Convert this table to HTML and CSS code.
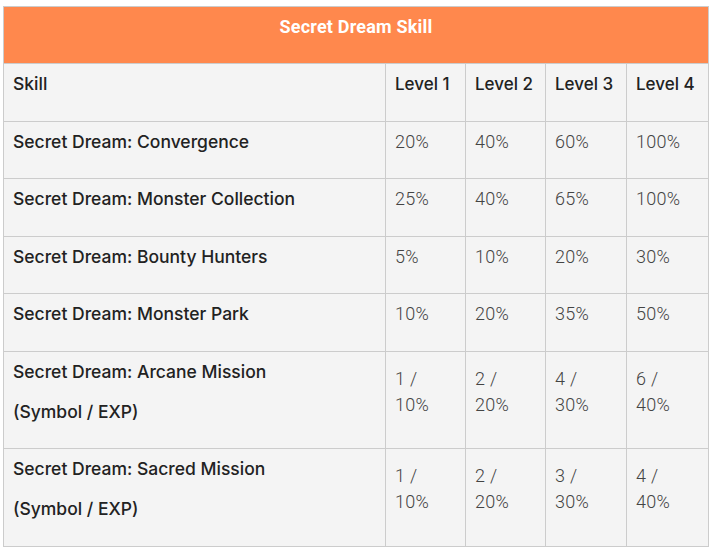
FILE: index.html
```html
<!DOCTYPE html>
<html>
<head>
<meta charset="utf-8">
<link rel="stylesheet" href="styles.css">
</head>
<body>
<div class="wrap">
<table class="skills">
  <colgroup>
    <col class="c-name"><col class="c-lv"><col class="c-lv"><col class="c-lv3"><col class="c-lv4">
  </colgroup>
  <thead>
    <tr><th colspan="5" class="title">Secret Dream Skill</th></tr>
    <tr class="head">
      <td class="name">Skill</td>
      <td class="lvh">Level 1</td>
      <td class="lvh">Level 2</td>
      <td class="lvh">Level 3</td>
      <td class="lvh">Level 4</td>
    </tr>
  </thead>
  <tbody>
    <tr>
      <td class="name">Secret Dream: Convergence</td>
      <td class="val">20%</td><td class="val">40%</td><td class="val">60%</td><td class="val">100%</td>
    </tr>
    <tr>
      <td class="name">Secret Dream: Monster Collection</td>
      <td class="val">25%</td><td class="val">40%</td><td class="val">65%</td><td class="val">100%</td>
    </tr>
    <tr>
      <td class="name">Secret Dream: Bounty Hunters</td>
      <td class="val">5%</td><td class="val">10%</td><td class="val">20%</td><td class="val">30%</td>
    </tr>
    <tr>
      <td class="name">Secret Dream: Monster Park</td>
      <td class="val">10%</td><td class="val">20%</td><td class="val">35%</td><td class="val">50%</td>
    </tr>
    <tr>
      <td class="name">Secret Dream: Arcane Mission<br>(Symbol / EXP)</td>
      <td class="val">1 /<br>10%</td><td class="val">2 /<br>20%</td><td class="val">4 /<br>30%</td><td class="val">6 /<br>40%</td>
    </tr>
    <tr>
      <td class="name">Secret Dream: Sacred Mission<br>(Symbol / EXP)</td>
      <td class="val">1 /<br>10%</td><td class="val">2 /<br>20%</td><td class="val">3 /<br>30%</td><td class="val">4 /<br>40%</td>
    </tr>
  </tbody>
</table>
</div>
</body>
</html>
```

FILE: styles.css
```css
html, body {
  margin: 0;
  padding: 0;
  background: #ffffff;
}
.wrap {
  padding: 6px 5px 0 3px;
}
.skills {
  border-collapse: collapse;
  width: 705px;
  table-layout: fixed;
  font-family: Roboto, "Liberation Sans", sans-serif;
  font-size: 18px;
  background: #f4f4f4;
}
.c-name { width: 382px; }
.c-lv { width: 80px; }
.c-lv3 { width: 81px; }
.c-lv4 { width: 82px; }
.skills th, .skills td {
  border: 1px solid #cccccc;
  vertical-align: middle;
  text-align: left;
  padding: 0 9px 16.5px 9px;
}
.title {
  background: #ff884d;
  color: #ffffff;
  font-weight: 700;
  text-align: center !important;
  line-height: 40px;
  letter-spacing: 0.2px;
  padding-bottom: 16px !important;
}
.name, .lvh {
  color: #222222;
  font-family: Inter, Roboto, sans-serif;
  font-size: 17.5px;
  font-weight: 500;
  line-height: 40px;
}
.lvh {
  font-size: 17px;
}
.val {
  color: #444444;
  font-weight: 300;
  line-height: 26px;
  letter-spacing: 0.3px;
}
```
